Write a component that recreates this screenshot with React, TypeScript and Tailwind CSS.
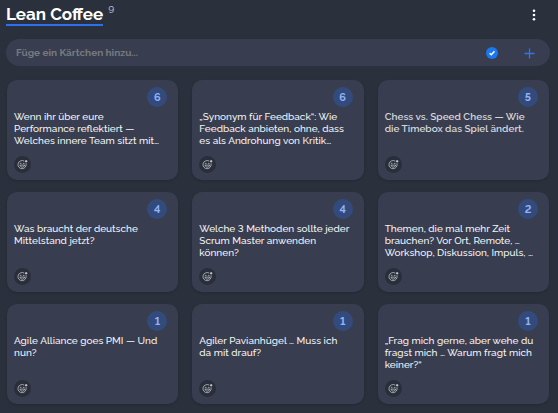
import React, { useState } from 'react';

const cards = [
  { votes: 6, text: 'Wenn ihr über eure\nPerformance reflektiert —\nWelches innere Team sitzt mit…' },
  { votes: 6, text: '„Synonym für Feedback“: Wie\nFeedback anbieten, ohne, dass\nes als Androhung von Kritik…' },
  { votes: 5, text: 'Chess vs. Speed Chess — Wie\ndie Timebox das Spiel ändert.', muted: true },
  { votes: 4, text: 'Was braucht der deutsche\nMittelstand jetzt?' },
  { votes: 4, text: 'Welche 3 Methoden sollte jeder\nScrum Master anwenden\nkönnen?' },
  { votes: 2, text: 'Themen, die mal mehr Zeit\nbrauchen? Vor Ort, Remote, …\nWorkshop, Diskussion, Impuls, …' },
  { votes: 1, text: 'Agile Alliance goes PMI — Und\nnun?' },
  { votes: 1, text: 'Agiler Pavianhügel … Muss ich\nda mit drauf?' },
  { votes: 1, text: '„Frag mich gerne, aber wehe du\nfragst mich … Warum fragt mich\nkeiner?“' },
];

const ReactionIcon = () => (
  <svg viewBox="0 0 20 20" className="w-[11px] h-[11px]" fill="none" stroke="currentColor" strokeWidth="1.3" strokeLinecap="round">
    <path d="M12.500 3.400A7.500 7.500 0 1 0 16.600 8.500" />
    <path d="M5.500 11.800c.8 2.200 2.300 3 4.100 3s3.400-.8 4.200-3Z" />
    <path d="M5.500 8.500c.6-1 1.800-1 2.400 0M11 8.500c.6-1 1.800-1 2.400 0" />
    <path d="M16.600 2.600v3M15.100 4.100h3" strokeWidth="1.800" />
  </svg>
);

const Card = ({ votes, text, muted }: { votes: number; text: string; muted?: boolean }) => (
  <li className="flex flex-col min-h-[100px] p-[7px] rounded-[10px] bg-[#383e50] shadow-sm">
    <span className="flex items-center justify-center self-end w-5 h-5 mr-1 rounded-full bg-[#334b7c] text-[#91b2f8] text-[11px] leading-none font-bold">
      {votes}
    </span>
    <p className={`mt-1 text-[10px] leading-[12px] whitespace-pre-line ${muted ? 'font-semibold text-[#d3d5db]' : 'font-medium text-[#f3f4f6]'}`}>
      {text}
    </p>
    <button aria-label="Reaktion hinzufügen" className="flex items-center justify-center w-[17px] h-[17px] mt-auto rounded-full bg-[#292e3a] text-[#d0d2d8]">
      <ReactionIcon />
    </button>
  </li>
);

const App = () => {
  const [note, setNote] = useState('');

  return (
    <main className="min-h-screen bg-[#2a303c] pl-[6px] pr-2 pb-2 font-['Raleway','Lato',sans-serif] lining-nums">
      <header className="flex items-start justify-between h-[39px] pt-1">
        <div className="flex items-start gap-[5px]">
          <h1 className="border-b-2 border-[#2e6fed] text-[17px] leading-[20px] font-bold text-white">Lean Coffee</h1>
          <span className="text-[10px] leading-[12px] font-medium text-[#b5b8c0]">9</span>
        </div>
        <button aria-label="Spaltenmenü" className="flex items-center justify-center w-4 h-[22px] mr-2 text-white">
          <svg viewBox="0 0 4 12" className="w-1 h-3" fill="currentColor">
            <circle cx="2" cy="1.800" r="1.300" />
            <circle cx="2" cy="6" r="1.300" />
            <circle cx="2" cy="10.200" r="1.300" />
          </svg>
        </button>
      </header>

      <form className="flex items-center h-[27px] pl-[10px] pr-[14px] rounded-full bg-[#383e50]" onSubmit={(e) => e.preventDefault()}>
        <input
          aria-label="Neues Kärtchen"
          value={note}
          onChange={(e) => setNote(e.target.value)}
          placeholder="Füge ein Kärtchen hinzu..."
          className="flex-1 min-w-0 h-5 text-[10px] font-bold text-white placeholder:text-[#77797f] outline-none"
        />
        <button type="button" aria-label="Vorlagen" className="flex items-center justify-center w-3 h-3 mr-6 rounded-full bg-[#1977ef] text-white">
          <svg viewBox="0 0 12 12" className="w-3 h-3" fill="none" stroke="currentColor" strokeWidth="1.500">
            <path d="M3.600 6.200 5.300 7.800 8.500 4.300" />
          </svg>
        </button>
        <button type="submit" aria-label="Hinzufügen" className="text-[#3570ee]">
          <svg viewBox="0 0 14 14" className="w-[14px] h-[14px]" fill="none" stroke="currentColor" strokeWidth="1.300">
            <path d="M7.500 2.500v10M2.500 7.500h10" />
          </svg>
        </button>
      </form>

      <ul className="grid grid-cols-3 gap-x-[14px] gap-y-3 pl-px pr-px mt-[14px]">
        {cards.map((card, i) => (
          <Card key={i} {...card} />
        ))}
      </ul>
    </main>
  );
};

export default App;
